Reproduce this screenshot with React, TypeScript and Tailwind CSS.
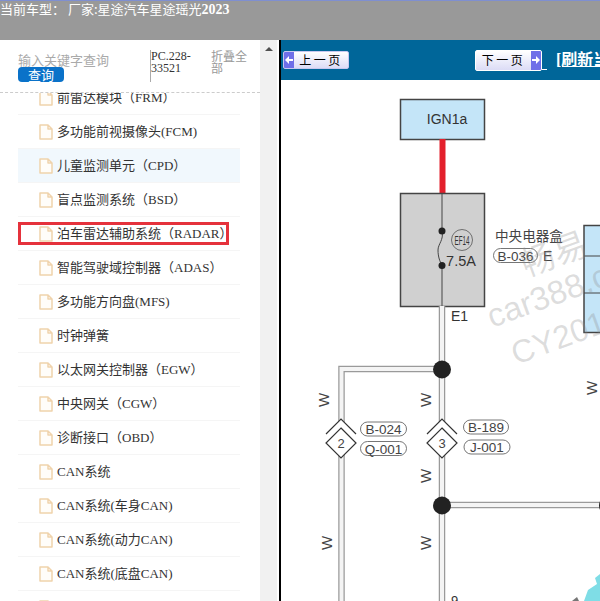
const items = [
  '前雷达模块（FRM）',
  '多功能前视摄像头(FCM)',
  '儿童监测单元（CPD）',
  '盲点监测系统（BSD）',
  '泊车雷达辅助系统（RADAR）',
  '智能驾驶域控制器（ADAS）',
  '多功能方向盘(MFS)',
  '时钟弹簧',
  '以太网关控制器（EGW）',
  '中央网关（CGW）',
  '诊断接口（OBD）',
  'CAN系统',
  'CAN系统(车身CAN)',
  'CAN系统(动力CAN)',
  'CAN系统(底盘CAN)',
  'CAN系统',
];

const serif = 'font-["Liberation_Serif","Noto_Sans_CJK_SC",serif]';

function DocIcon() {
  return (
    <svg width="14" height="16" viewBox="0 0 14 16" className="shrink-0">
      <path d="M1 1h8l4 4v10H1z M9 1v4h4" fill="#fffdf9" stroke="#f0d3ac" strokeWidth="1.5" strokeLinejoin="round" />
    </svg>
  );
}

function PageButton({ label, next }: { label: string; next?: boolean }) {
  const arrow = (
    <span className="flex h-full w-[10px] shrink-0 items-center justify-center bg-[#6f6fe8]">
      <svg width="8" height="8" viewBox="0 0 8 8">
        <path d={next ? 'M0 3h4V0l4 4-4 4V5H0z' : 'M8 3H4V0L0 4l4 4V5h4z'} fill="#fff" />
      </svg>
    </span>
  );
  return (
    <button
      className={`flex shrink-0 items-center overflow-hidden rounded-[2px] bg-gradient-to-b from-white to-[#dcdcf6] font-['Noto_Sans_CJK_SC',sans-serif] text-[12px] leading-none text-black ${
        next ? 'h-[21px] w-[67px] border border-white' : 'h-[18px] w-[66px] border border-[#c8c8f0]'
      }`}
    >
      {!next && arrow}
      <span className="flex-1 whitespace-nowrap text-center tracking-[2.5px]">{label}</span>
      {next && arrow}
    </button>
  );
}

function Pill({ x, y, w, text }: { x: number; y: number; w: number; text: string }) {
  return (
    <g>
      <rect x={x} y={y} width={w} height={14} rx={7} fill="#fff" stroke="#666" strokeWidth="0.9" />
      <text x={x + w / 2} y={y + 12} textAnchor="middle" fontSize="13.5" fill="#444">{text}</text>
    </g>
  );
}

function Wire({ d }: { d: string }) {
  return (
    <g fill="none">
      <path d={d} stroke="#9a9a9a" strokeWidth="6.5" />
      <path d={d} stroke="#f4f4f4" strokeWidth="4" />
    </g>
  );
}

function WLabel({ x, y }: { x: number; y: number }) {
  return (
    <text x={x} y={y} transform={`rotate(-90 ${x} ${y})`} textAnchor="middle" fontSize="15" fill="#444">W</text>
  );
}

function Diamond({ x, y, n }: { x: number; y: number; n: string }) {
  return (
    <g fill="none" stroke="#333" strokeWidth="1.2">
      <path d={`M${x - 15} ${y - 9}L${x} ${y - 24}L${x + 15} ${y - 9}`} fill="#fff" />
      <path d={`M${x} ${y - 15}L${x + 15} ${y}L${x} ${y + 15}L${x - 15} ${y}Z`} fill="#fff" />
      <text x={x} y={y + 5} textAnchor="middle" fontSize="13" fill="#444" stroke="none">{n}</text>
    </g>
  );
}

function Diagram() {
  return (
    <svg viewBox="281 80 319 521" className="h-full w-full font-['Liberation_Sans','Noto_Sans_CJK_SC',sans-serif]">
      <rect x="400.5" y="99.5" width="84" height="40" fill="#c4e5f8" stroke="#444" strokeWidth="1.5" />
      <text x="447" y="124" textAnchor="middle" fontSize="14" fill="#333">IGN1a</text>
      <rect x="439.5" y="139" width="6" height="55" fill="#e3202c" />
      <rect x="400.5" y="193.5" width="84" height="113" fill="#d0d0d0" stroke="#444" strokeWidth="1.5" />
      <path d="M442 194V231M442 265V306" stroke="#444" strokeWidth="1" />
      <path d="M442 231C444 240 438 244 438 250C438 257 440 262 442 265" fill="none" stroke="#444" strokeWidth="1" />
      <circle cx="442" cy="231" r="3.5" fill="#222" />
      <circle cx="442" cy="265.5" r="3.5" fill="#222" />
      <circle cx="462" cy="240" r="10.5" fill="none" stroke="#555" strokeWidth="0.8" />
      <text x="462" y="245" textAnchor="middle" fontSize="12" fill="#333" textLength="15" lengthAdjust="spacingAndGlyphs">EF14</text>
      <text x="461" y="266" textAnchor="middle" fontSize="14.5" fill="#333">7.5A</text>
      <text x="495" y="241" fontSize="13.6" fill="#444">中央电器盒</text>
      <Pill x={493.5} y={248.5} w={44} text="B-036" />
      <text x="543" y="260.5" fontSize="14" fill="#444">E</text>
      <rect x="584" y="225.5" width="20" height="107" fill="#c4e5f8" stroke="#444" strokeWidth="1.5" />
      <path d="M584 256H600M584 293H600" stroke="#444" strokeWidth="1" />
      <text x="451" y="321" fontSize="14" fill="#333">E1</text>
      <Wire d="M442 306V601" />
      <Wire d="M442 369H341.5V601" />
      <Wire d="M442 505H604" />
      <circle cx="442" cy="369.5" r="9" fill="#222" />
      <circle cx="442" cy="505.5" r="9" fill="#222" />
      <circle cx="608" cy="505.5" r="9" fill="#222" />
      <Diamond x={341} y={443} n="2" />
      <Diamond x={442} y={443} n="3" />
      <Pill x={360.5} y={422} w={46} text="B-024" />
      <Pill x={360.5} y={441.5} w={46} text="Q-001" />
      <Pill x={463.5} y={420} w={45} text="B-189" />
      <Pill x={464} y={440} w={46} text="J-001" />
      <WLabel x={329} y={400} />
      <WLabel x={431} y={400} />
      <WLabel x={431} y={476} />
      <WLabel x={332} y={543} />
      <WLabel x={431} y={543} />
      <WLabel x={597} y={388} />
      <text x="451" y="605" fontSize="13" fill="#333">9</text>
      <path d="M600 574L595 578L597 584L588 590L584 601H600Z" fill="#7fdde6" />
      <path d="M572 601L577 597L579 601Z" fill="#777" />
      <g fill="#888" fillOpacity="0.28">
        <text x="526" y="277" fontSize="34" transform="rotate(-20 526 277)">畅易</text>
        <text x="492" y="328" fontSize="33" transform="rotate(-20 492 328)">car388.c</text>
        <text x="516" y="365" fontSize="32" transform="rotate(-20 516 365)">CY2019</text>
      </g>
    </svg>
  );
}

export default function App() {
  return (
    <div className="flex h-[601px] w-[600px] flex-col overflow-hidden bg-white">
      <header className="h-10 shrink-0 border-t border-[#7f8fd0] bg-[#999999] font-['Noto_Sans_CJK_SC',sans-serif] text-[13px] leading-[16px] text-white">
        当前车型： 厂家:星途汽车星途瑶光<span className={`${serif} text-[14px] font-bold`}>2023</span>
      </header>
      <div className="flex min-h-0 flex-1">
        <aside className="flex w-[260px] shrink-0 flex-col">
          <div className="flex h-[53px] shrink-0 border-b border-dashed border-[#cccccc] pl-[18px] pt-[10px] font-['Noto_Sans_CJK_SC',sans-serif]">
            <div className="w-[132px] pt-[2px]">
              <div className="text-[13px] leading-[15px] text-[#aaaaaa]">输入关键字查询</div>
              <button className="block h-[15px] w-[46px] rounded-[4px] bg-[#0a72c9] text-center text-[13px] leading-[15px] text-white">查询</button>
            </div>
            <div className={`h-[32px] w-[61px] border-l border-[#aaaaaa] ${serif} text-[12px] leading-[12px] text-[#333333]`}>PC.228-33521</div>
            <div className="w-[38px] text-[12px] leading-[12px] text-[#999999]">折叠全部</div>
          </div>
          <div className="min-h-0 flex-1 overflow-hidden">
            <ul className={`-mt-[12px] pl-[18px] pr-[20px] ${serif} text-[13px] text-[#333333]`}>
              {items.map((item, i) => (
                <li
                  key={i}
                  className={`relative flex h-[34px] items-center gap-[4px] border-b border-[#f5f5f5] pl-[21px] ${i === 2 ? 'bg-[#f1f8fd]' : ''}`}
                >
                  <DocIcon />
                  <span className="whitespace-nowrap">{item}</span>
                  {i === 4 && <span className="absolute left-0 top-[5px] h-[23px] w-[211px] border-[3px] border-[#e5323c]" />}
                </li>
              ))}
            </ul>
          </div>
        </aside>
        <div className="flex w-[19px] shrink-0">
          <div className="flex w-[17px] justify-center bg-[#f1f1f1] pt-[7px]">
            <span className="h-0 w-0 border-x-[4px] border-b-[4px] border-x-transparent border-b-[#505050]" />
          </div>
          <div className="w-[2px] bg-white" />
        </div>
        <main className="flex min-w-0 flex-1 flex-col border-l-2 border-black">
          <div className="flex h-10 shrink-0 items-center overflow-hidden bg-[#006699] pl-[2px]">
            <PageButton label="上一页" />
            <div className="w-[126px] shrink-0" />
            <PageButton label="下一页" next />
            <span className="mt-[18px] h-[1px] w-[5px] shrink-0 bg-white" />
            <a className={`ml-[9px] whitespace-nowrap ${serif} text-[16px] font-bold text-white underline`}>[刷新当前页]</a>
          </div>
          <div className="min-h-0 flex-1">
            <Diagram />
          </div>
        </main>
      </div>
    </div>
  );
}
